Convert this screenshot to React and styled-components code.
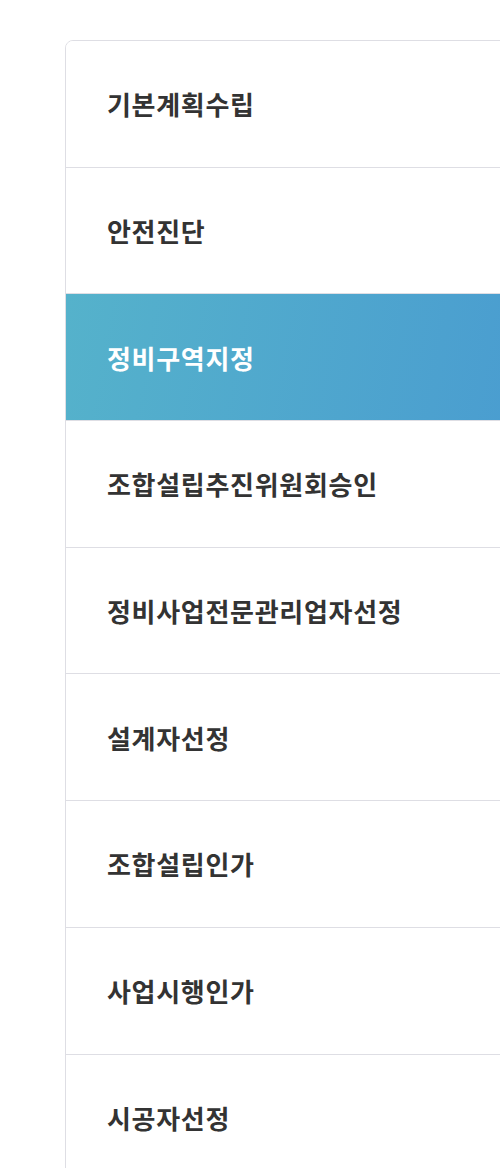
import React from 'react'
import styled, { createGlobalStyle } from 'styled-components'

const GlobalStyle = createGlobalStyle`
  html, body {
    margin: 0;
    padding: 0;
    background: #fff;
    overflow: hidden;
  }
  body {
    font-family: "Noto Sans CJK KR", "Noto Sans", sans-serif;
  }
`

const Wrapper = styled.div`
  padding-top: 40px;
  padding-left: 65px;
`

const Menu = styled.ul`
  list-style: none;
  margin: 0 -20px 0 0;
  padding: 0;
  border: 1px solid #dedee4;
  border-top-left-radius: 8px;
  overflow: hidden;
`

const Item = styled.li`
  box-sizing: border-box;
  height: 126.7px;
  display: flex;
  align-items: center;
  padding-left: 41px;
  border-bottom: 1px solid #dedee4;
  font-size: 26px;
  font-weight: 700;
  letter-spacing: 0.7px;
  color: ${({ $active }) => ($active ? '#fff' : '#333')};
  background: ${({ $active }) =>
    $active ? 'linear-gradient(100deg, #55b2cb 0%, #4a9dd0 100%)' : '#fff'};
  &:last-child {
    border-bottom: none;
  }
`

const steps = [
  '기본계획수립',
  '안전진단',
  '정비구역지정',
  '조합설립추진위원회승인',
  '정비사업전문관리업자선정',
  '설계자선정',
  '조합설립인가',
  '사업시행인가',
  '시공자선정',
]

export default function App() {
  return (
    <Wrapper>
      <GlobalStyle />
      <Menu>
        {steps.map((step) => (
          <Item key={step} $active={step === '정비구역지정'}>
            {step}
          </Item>
        ))}
      </Menu>
    </Wrapper>
  )
}
